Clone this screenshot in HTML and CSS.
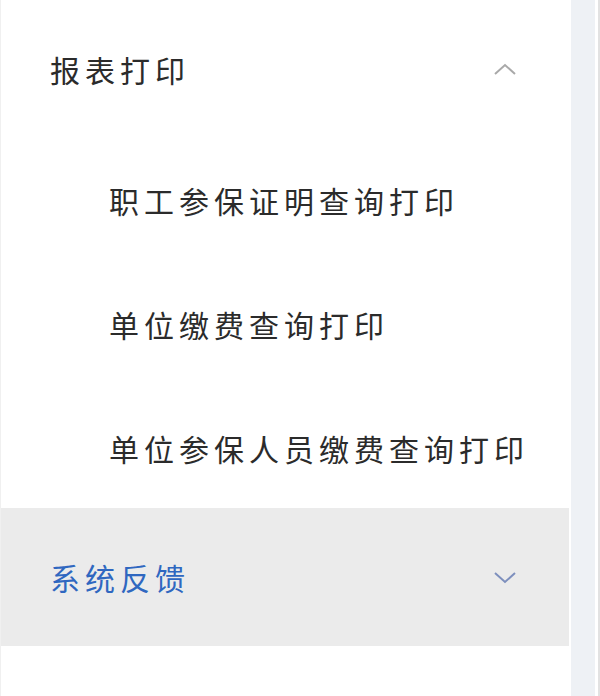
FILE: index.html
```html
<!DOCTYPE html>
<html lang="zh-CN">
<head>
  <meta charset="UTF-8">
  <title>菜单</title>
  <link rel="stylesheet" href="styles.css">
</head>
<body>

  <div class="layout">
    <nav class="menu">
      <div class="menu-group">
        <div class="menu-title">
          <span>报表打印</span>
          <svg class="arrow" width="24" height="14" viewBox="0 0 24 14"><path d="M2 12 L12 3 L22 12" fill="none" stroke="#a9a9a9" stroke-width="2"/></svg>
        </div>
        <ul class="submenu">
          <li>职工参保证明查询打印</li>
          <li>单位缴费查询打印</li>
          <li>单位参保人员缴费查询打印</li>
        </ul>
      </div>
      <div class="menu-group active">
        <div class="menu-title">
          <span>系统反馈</span>
          <svg class="arrow" width="24" height="14" viewBox="0 0 24 14"><path d="M2 3 L12 12 L22 3" fill="none" stroke="#7d8fbd" stroke-width="2"/></svg>
        </div>
      </div>
    </nav>
    <div class="scroll-track"></div>
  </div>

</body>
</html>
```

FILE: styles.css
```css
body {
  margin: 0;
  background: #fff;
  font-family: "Noto Sans CJK SC", "Noto Sans", sans-serif;
}
.layout {
  display: flex;
  height: 696px;
}
.menu {
  width: 568px;
  border-left: 1px solid #f0f0f0;
}
.menu-title {
  display: flex;
  align-items: center;
  justify-content: space-between;
  height: 138px;
  padding: 0 52px 0 49px;
  font-size: 30px;
  letter-spacing: 5px;
  color: #2b2b2b;
}
.submenu {
  list-style: none;
  margin: 0;
  padding: 0;
}
.submenu li {
  height: 124px;
  line-height: 124px;
  padding-left: 108px;
  font-size: 30px;
  letter-spacing: 5px;
  color: #2b2b2b;
}
.active .menu-title {
  margin-top: -2px;
  background: #ebebeb;
  color: #2f67c0;
}
.scroll-track {
  width: 24px;
  margin-left: 2px;
  background: #eef1f5;
  border-right: 3px solid #fff;
  box-shadow: 3px 0 0 #e2e2e2;
}
```
